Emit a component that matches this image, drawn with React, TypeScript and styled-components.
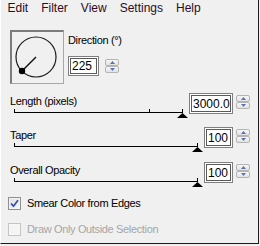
import React from "react";
import styled, { createGlobalStyle } from "styled-components";

const GlobalStyle = createGlobalStyle`
  html, body { margin: 0; padding: 0; background: #f0f0f0; }
  body { width: 260px; height: 246px; overflow: hidden; font-family: "Liberation Sans", Arial, sans-serif; }
`;

const NARROW = `"Liberation Sans", Arial, sans-serif`;

const Frame = styled.div`
  width: 259px;
  height: 244px;
  box-sizing: border-box;
  border-left: 1px solid #ffffff;
  border-right: 1px solid #1c1c1c;
  border-bottom: 1px solid #1c1c1c;
  background: #f0f0f0;
  display: flex;
  flex-direction: column;
`;

const MenuBar = styled.div`
  display: flex;
  height: 20px;
  padding-top: 1px;
  box-sizing: border-box;
`;

const MenuItem = styled.div`
  padding: 0 6.5px;
  font-family: "Liberation Sans", Arial, sans-serif;
  font-size: 12px;
  line-height: 14px;
  color: #2e0c26;
`;

const DialSection = styled.div`
  display: flex;
  gap: 4px;
  padding: 10px 0 0 9px;
`;

const DialBox = styled.div`
  width: 54px;
  height: 54px;
  box-sizing: border-box;
  border-top: 2px solid #7c7c7c;
  border-left: 2px solid #7c7c7c;
  border-right: 1px solid #a8a8a8;
  border-bottom: 1px solid #a8a8a8;
  svg { display: block; }
`;

const DirectionCol = styled.div`
  display: flex;
  flex-direction: column;
  padding-top: 4px;
`;

const Label = styled.div<{ $top?: number }>`
  font-family: ${NARROW};
  font-size: 11px;
  letter-spacing: -0.35px;
  line-height: 12px;
  height: 12px;
  color: #000;
  white-space: nowrap;
  margin-top: ${(p) => p.$top ?? 0}px;
`;

const SpinField = styled.div<{ $top?: number }>`
  display: flex;
  align-items: center;
  gap: 3px;
  margin-top: ${(p) => p.$top ?? 0}px;
`;

const ValueBox = styled.div<{ $w: number; $h: number }>`
  width: ${(p) => p.$w}px;
  height: ${(p) => p.$h}px;
  box-sizing: border-box;
  border: 1px solid #7f7f7f;
  box-shadow: inset 0 0 0 1px #ffffff, inset 0 0 0 2px #5a5a5a;
  background: #fff;
  padding-left: 3px;
  display: flex;
  align-items: center;
  font-family: "Liberation Sans", Arial, sans-serif;
  font-size: 12px;
  color: #000;
`;

const Spinner = styled.div<{ $top?: number }>`
  display: flex;
  flex-direction: column;
  width: 14px;
  margin-top: ${(p) => p.$top ?? 0}px;
  margin-left: 3px;
`;

const SpinButton = styled.div`
  height: 7px;
  box-sizing: border-box;
  border: 1px solid #b4b4b4;
  border-radius: 2px;
  background: linear-gradient(#f7f7f7, #e2e2e2);
  display: flex;
  align-items: center;
  justify-content: center;
  svg { display: block; }
`;

const Sliders = styled.div`
  display: flex;
  flex-direction: column;
  padding: 0 8px 0 9px;
`;

const SliderRow = styled.div<{ $top: number }>`
  display: flex;
  align-items: flex-start;
  margin-top: ${(p) => p.$top}px;
`;

const SliderCol = styled.div`
  flex: 1;
  min-width: 0;
  display: flex;
  flex-direction: column;
`;

const TrackSvg = styled.svg`
  display: block;
  height: 11px;
  width: calc(100% - 10px);
  margin: 0 6px 0 4px;
  overflow: visible;
`;

const CheckList = styled.div`
  display: flex;
  flex-direction: column;
  padding: 10px 0 0 7px;
  gap: 13px;
`;

const CheckRow = styled.div<{ $disabled?: boolean }>`
  display: flex;
  align-items: center;
  gap: 6px;
  height: 13px;
  font-family: ${NARROW};
  font-size: 11px;
  letter-spacing: -0.35px;
  line-height: 13px;
  color: ${(p) => (p.$disabled ? "#a6a6a6" : "#000")};
`;

const CheckBox = styled.div<{ $disabled?: boolean }>`
  width: 13px;
  height: 13px;
  box-sizing: border-box;
  border: 1px solid ${(p) => (p.$disabled ? "#c4c4c4" : "#8e8f8f")};
  background: ${(p) =>
    p.$disabled ? "#f4f4f4" : "linear-gradient(135deg, #dcdfe8, #f6f7fa)"};
  box-shadow: inset 0 0 0 1px ${(p) => (p.$disabled ? "#f8f8f8" : "#f4f4f4")};
  display: flex;
  align-items: center;
  justify-content: center;
  svg { display: block; }
`;

const Arrow = ({ up }: { up?: boolean }) => (
  <svg width="5" height="3" viewBox="0 0 5 3">
    <polygon points={up ? "0,3 5,3 2.5,0" : "0,0 5,0 2.5,3"} fill="#5b72b8" />
  </svg>
);

const Spin = ({ top }: { top?: number }) => (
  <Spinner $top={top}>
    <SpinButton>
      <Arrow up />
    </SpinButton>
    <SpinButton>
      <Arrow />
    </SpinButton>
  </Spinner>
);

const Track = ({ ticks = [] }: { ticks?: number[] }) => (
  <TrackSvg>
    <line x1="0" y1="5.5" x2="100%" y2="5.5" stroke="#000" strokeWidth="1" />
    <line x1="0.5" y1="2" x2="0.5" y2="5" stroke="#000" strokeWidth="1" />
    {ticks.map((t) => (
      <line key={t} x1={t + 0.5} y1="2" x2={t + 0.5} y2="5" stroke="#000" strokeWidth="1" />
    ))}
    <svg x="100%" y="0" overflow="visible">
      <line x1="-0.5" y1="2" x2="-0.5" y2="5" stroke="#000" strokeWidth="1" />
      <polygon points="-0.5,6 -6,11 5,11" fill="#000" />
    </svg>
  </TrackSvg>
);

type SliderProps = { label: string; value: string; width: number; top: number; ticks?: number[] };

const Slider = ({ label, value, width, top, ticks }: SliderProps) => (
  <SliderRow $top={top}>
    <SliderCol>
      <Label $top={2}>{label}</Label>
      <Track ticks={ticks} />
    </SliderCol>
    <ValueBox $w={width} $h={21}>{value}</ValueBox>
    <Spin top={2} />
  </SliderRow>
);

const Dial = () => (
  <DialBox>
    <svg width="51" height="51" viewBox="0 0 51 51">
      <circle cx="24" cy="25" r="20" fill="none" stroke="#1a1a1a" strokeWidth="1.2" />
      <line x1="24" y1="25" x2="10" y2="39" stroke="#111" strokeWidth="1.4" />
      <circle cx="10" cy="39" r="3.2" fill="#000" />
    </svg>
  </DialBox>
);

export default function App() {
  return (
    <>
      <GlobalStyle />
      <Frame>
        <MenuBar>
          {["Edit", "Filter", "View", "Settings", "Help"].map((m) => (
            <MenuItem key={m}>{m}</MenuItem>
          ))}
        </MenuBar>
        <DialSection>
          <Dial />
          <DirectionCol>
            <Label>Direction (°)</Label>
            <SpinField $top={10}>
              <ValueBox $w={31} $h={20}>225</ValueBox>
              <Spin />
            </SpinField>
          </DirectionCol>
        </DialSection>
        <Sliders>
          <Slider label="Length (pixels)" value="3000.0" width={44} top={9} ticks={[135]} />
          <Slider label="Taper" value="100" width={29} top={9} />
          <Slider label="Overall Opacity" value="100" width={29} top={10} />
        </Sliders>
        <CheckList>
          <CheckRow>
            <CheckBox>
              <svg width="9" height="9" viewBox="0 0 9 9">
                <path d="M1 4.5 L3.5 7.2 L8 1.2" fill="none" stroke="#3d4fa6" strokeWidth="1.8" />
              </svg>
            </CheckBox>
            Smear Color from Edges
          </CheckRow>
          <CheckRow $disabled>
            <CheckBox $disabled />
            Draw Only Outside Selection
          </CheckRow>
        </CheckList>
      </Frame>
    </>
  );
}
